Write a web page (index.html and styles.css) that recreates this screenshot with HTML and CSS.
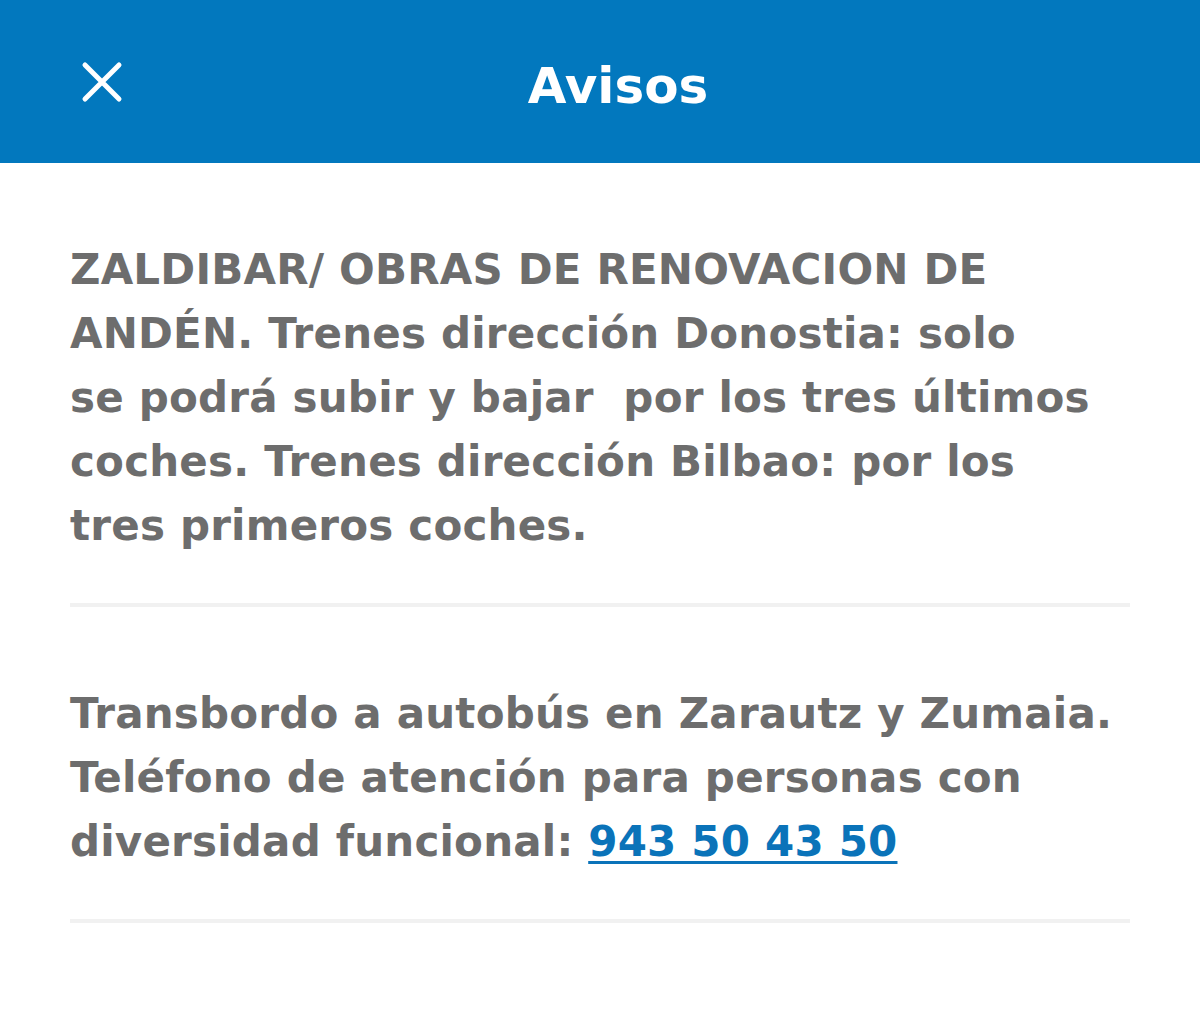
FILE: index.html
```html
<!DOCTYPE html>
<html lang="es">
<head>
    <meta charset="UTF-8">
    <meta name="viewport" content="width=device-width, initial-scale=1.0">
    <title>Avisos</title>
    <link rel="stylesheet" href="styles.css">
</head>
<body>
    <div class="container">
        <!-- cabecera -->
        <header class="top-bar">
            <button class="close-btn" aria-label="Cerrar">
                <svg width="42" height="42" viewBox="0 0 42 42">
                    <path d="M4 4 L38 38 M38 4 L4 38" stroke="#fff" stroke-width="5" stroke-linecap="round" fill="none"/>
                </svg>
            </button>
            <h1 class="title">Avisos</h1>
        </header>

        <!-- lista de avisos -->
        <div class="notice-list">
            <div class="notice">
                <p class="notice-text">ZALDIBAR/ OBRAS DE RENOVACION DE<br>ANDÉN. Trenes dirección Donostia: solo<br>se podrá subir y bajar&nbsp; por los tres últimos<br>coches. Trenes dirección Bilbao: por los<br>tres primeros coches.</p>
            </div>
            <div class="notice">
                <p class="notice-text">Transbordo a autobús en Zarautz y Zumaia.<br>Teléfono de atención para personas con<br>diversidad funcional: <a href="tel:943504350">943 50 43 50</a></p>
            </div>
        </div>
    </div>
</body>
</html>
```

FILE: styles.css
```css
body, html {
    margin: 0;
    padding: 0;
    font-family: "DejaVu Sans", "Noto Sans", sans-serif;
    background: #fff;
    color: #6d6d6d;
}

.container {
    width: 100%;
}

.top-bar {
    height: 163px;
    background: #0278be;
    display: flex;
    align-items: center;
    box-sizing: border-box;
    padding-right: 104px;
}

.close-btn {
    width: 140px;
    height: 163px;
    flex-shrink: 0;
    background: none;
    border: none;
    padding: 0 0 0 81px;
    display: flex;
    align-items: center;
    cursor: pointer;
}

.title {
    flex: 1;
    margin: 0;
    color: #fff;
    font-size: 50px;
    font-weight: bold;
    text-align: center;
    padding-top: 8px;
}

.notice-list {
    margin: 0 70px;
}

.notice {
    padding: 75px 0 45px;
    border-bottom: 4px solid #f1f1f1;
}

.notice-text {
    margin: 0;
    font-size: 42px;
    font-weight: bold;
    line-height: 64px;
    letter-spacing: 0.2px;
    white-space: nowrap;
}

.notice-text a {
    color: #0a73b9;
    text-decoration: underline;
    text-decoration-thickness: 3px;
    text-underline-offset: 5px;
}
```
